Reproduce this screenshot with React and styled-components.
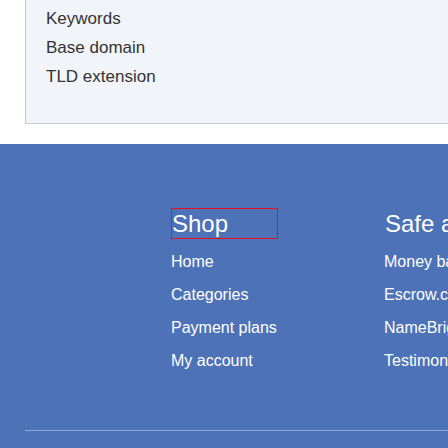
import React from "react";
import styled, { createGlobalStyle } from "styled-components";

const Global = createGlobalStyle`
  html, body { margin: 0; padding: 0; background: #ffffff; overflow: hidden; }
  body { font-family: "Liberation Sans", Arial, sans-serif; }
  ul { margin: 0; padding: 0; list-style: none; }
`;

const Page = styled.div`
  width: 448px;
  overflow: hidden;
`;

const Top = styled.div`
  padding-left: 25px;
`;

const Panel = styled.div`
  box-sizing: border-box;
  height: 124px;
  width: 600px;
  background: #f1f5f9;
  border-left: 1px solid #c3c6ca;
  border-bottom: 1px solid #c9ccd0;
  padding: 4px 0 0 20px;
`;

const PanelItem = styled.li`
  font-size: 17px;
  line-height: 29px;
  color: #333333;
  white-space: nowrap;
`;

const Footer = styled.footer`
  margin-top: 20px;
  background: #4d72b8;
  padding: 64px 0 40px 25px;
  width: 640px;
`;

const Columns = styled.div`
  display: grid;
  grid-template-columns: 146px 213px 213px;
`;

const Column = styled.div`
  display: flex;
  flex-direction: column;
`;

const Heading = styled.h3`
  box-sizing: border-box;
  margin: 0;
  width: 107px;
  font-size: 24px;
  line-height: 29px;
  font-weight: normal;
  color: #ffffff;
  white-space: nowrap;
  border: 1px solid ${(p) => (p.$outlined ? "#e8111d" : "transparent")};
`;

const Links = styled.ul`
  margin-top: 6px;
`;

const LinkItem = styled.li`
  font-size: 16px;
  line-height: 33px;
  color: #ffffff;
  white-space: nowrap;
`;

const Divider = styled.div`
  margin-top: 53px;
  height: 1px;
  background: #8eaadf;
`;

const shop = ["Home", "Categories", "Payment plans", "My account"];
const safe = ["Money back guarantee", "Escrow.com", "NameBright", "Testimonials"];

export default function App() {
  return (
    <Page>
      <Global />
      <Top>
        <Panel>
          <ul>
            <PanelItem>Keywords</PanelItem>
            <PanelItem>Base domain</PanelItem>
            <PanelItem>TLD extension</PanelItem>
          </ul>
        </Panel>
      </Top>
      <Footer>
        <Columns>
          <Column />
          <Column>
            <Heading $outlined>Shop</Heading>
            <Links>
              {shop.map((s) => (
                <LinkItem key={s}>{s}</LinkItem>
              ))}
            </Links>
          </Column>
          <Column>
            <Heading>Safe and secure</Heading>
            <Links>
              {safe.map((s) => (
                <LinkItem key={s}>{s}</LinkItem>
              ))}
            </Links>
          </Column>
        </Columns>
        <Divider />
      </Footer>
    </Page>
  );
}
